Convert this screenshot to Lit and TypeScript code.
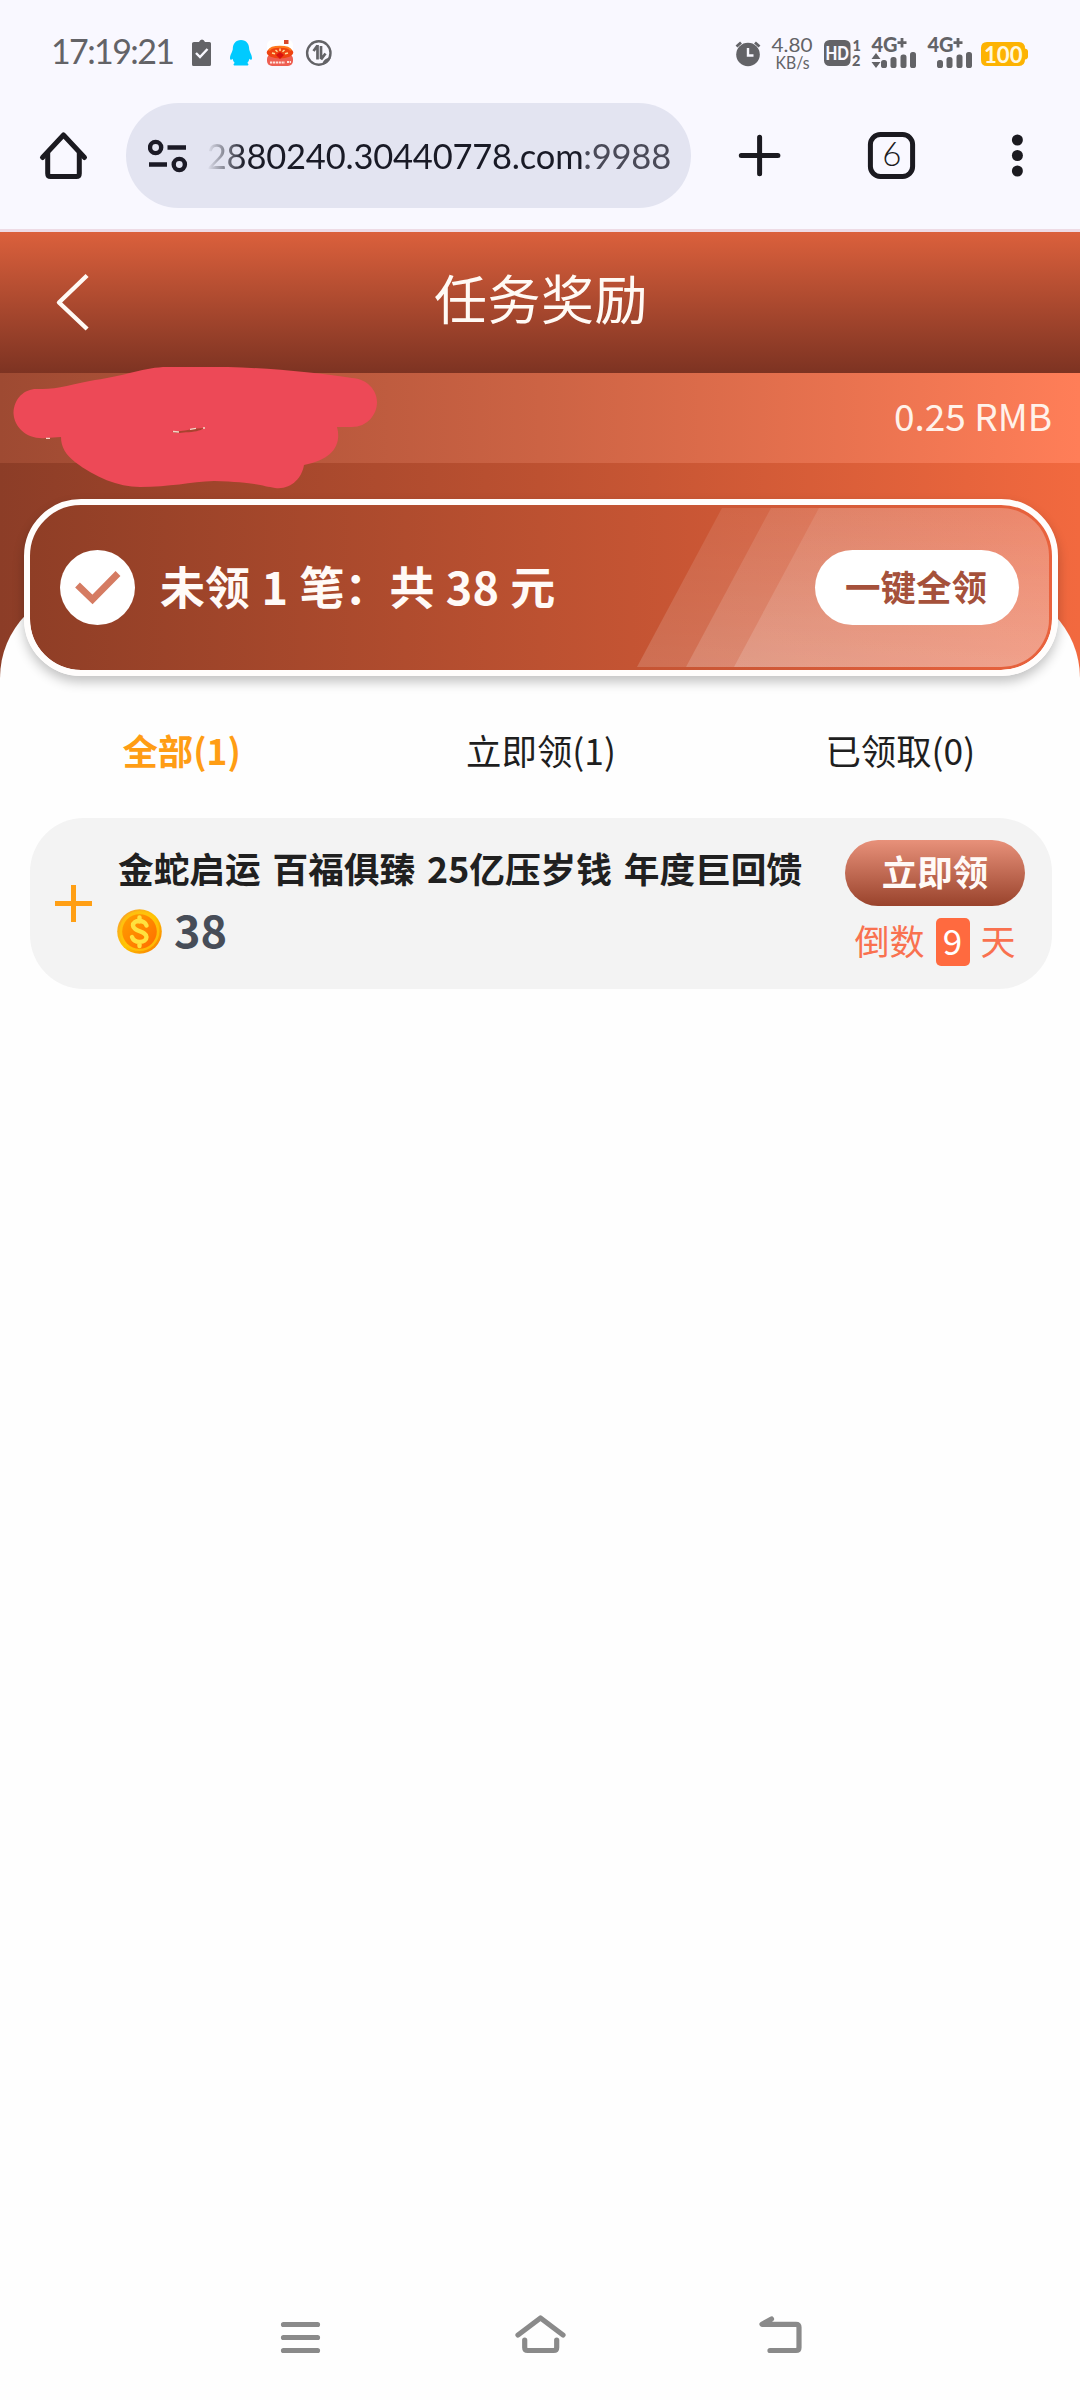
import { LitElement, html, css, svg } from "lit";
import { customElement, property, state } from "lit/decorators.js";
import { classMap } from "lit/directives/class-map.js";

const cjk = css`"Noto Sans CJK SC", "Noto Sans", sans-serif`;
const latin = css`Lato, "Noto Sans CJK SC", sans-serif`;

@customElement("status-bar")
class StatusBar extends LitElement {
  static styles = css`
    :host {
      display: flex;
      justify-content: space-between;
      height: 103px;
      color: #636367;
      font-family: ${latin};
    }
    svg {
      display: block;
      flex: none;
    }
    .glyphs {
      fill: #636367;
    }
  `;

  private bars(x: number) {
    return svg`
      <rect x=${x} y="24" width="6" height="8" rx="2.6"/>
      <rect x=${x + 9.5} y="21" width="6" height="11" rx="2.6"/>
      <rect x=${x + 19.5} y="18.5" width="6" height="13.5" rx="2.6"/>
      <rect x=${x + 29} y="16" width="6" height="16" rx="2.6"/>`;
  }

  render() {
    return html`
      <svg class="glyphs" width="360" height="103" viewBox="0 0 360 103">
        <text x="51" y="64.3" font-size="34" textLength="124" lengthAdjust="spacing">17:19:21</text>
        <path d="M194 42h5q1-2.500 3-2.500t3 2.500h4.500q1.500 0 1.500 1.500v21q0 1.500-1.500 1.500H193.500q-1.500 0-1.500-1.500v-21q0-1.500 2-1.500z"/>
        <path d="M196 53l4 4 7.500-8" fill="none" stroke="#f9f8ff" stroke-width="2.400"/>
        <path fill="#00caff" d="M241 40c5.500 0 8.200 4 8.200 9 0 2 2.800 6 2.800 9 0 2-1.200 2.500-2.600.8-.4 2-1.200 3.200-2.200 4.200 1.600.6 1.800 2.500-.2 2.500h-12c-2 0-1.800-1.900-.2-2.500-1-1-1.800-2.200-2.200-4.200-1.400 1.700-2.600 1.200-2.600-.8 0-3 2.800-7 2.800-9 0-5 2.700-9 8.200-9z"/>
        <rect x="267" y="40" width="26" height="26" rx="5" fill="#fff"/>
        <rect x="284" y="40" width="4.500" height="4" fill="#d8492c"/>
        <rect x="267" y="54" width="26" height="12" rx="5" fill="#ee5f52"/>
        <ellipse cx="280" cy="52.500" rx="13.200" ry="6" fill="#ef4310"/>
        <path d="M269 50.500c2-5 20-5 22 0" fill="none" stroke="#ff7a1d" stroke-width="2"/>
        <path d="M272 53l3 .8M275.500 50l2 1.700M280 48.500v2.500M284.500 50l-2 1.700M288 53l-3 .8" stroke="#ffe09a" stroke-width="1.500"/>
        <path d="M276 55l4-3 4 3-4 4z" fill="#d9120f"/>
        <path d="M270 62.500h15M287 62h4" stroke="#ffe3dc" stroke-width="2.200" stroke-dasharray="2.200 .7"/>
        <circle cx="318.800" cy="53" r="11.700" fill="none" stroke="#636367" stroke-width="2.400"/>
        <path d="M317.500 45v14.500M313.500 51l4-5.500M321 46v13M321 59.500l4.500-6" fill="none" stroke="#636367" stroke-width="2.700"/>
        <path d="M322 65c1-5 4-7 9-7.500-1.500 4-4.500 6.500-9 7.500z"/>
      </svg>
      <svg class="glyphs" width="360" height="103" viewBox="720 0 360 103">
        <circle cx="748" cy="54.500" r="11.800"/>
        <path d="M736.500 46.500l4.500-4M759.500 46.500l-4.500-4" stroke="#636367" stroke-width="2.800"/>
        <path d="M748 48v7.500h5.500" fill="none" stroke="#f9f8ff" stroke-width="2.400"/>
        <text x="771.500" y="51.800" font-size="19" textLength="41" lengthAdjust="spacingAndGlyphs">4.80</text>
        <text x="775.500" y="69.300" font-size="18" textLength="34" lengthAdjust="spacingAndGlyphs">KB/s</text>
        <rect x="824" y="40" width="26.500" height="26" rx="5.500"/>
        <text x="825.500" y="59.700" font-size="19" font-weight="900" fill="#f9f8ff" textLength="23.500" lengthAdjust="spacingAndGlyphs">HD</text>
        <text x="852.500" y="51.300" font-size="14.500" font-weight="900">1</text>
        <text x="852" y="65.500" font-size="14.500" font-weight="900">2</text>
        <text x="871.500" y="52.200" font-size="20" font-weight="900" textLength="26" lengthAdjust="spacingAndGlyphs">4G</text>
        <path d="M897.500 42.700h9M902 38v9.500" stroke="#636367" stroke-width="2.800"/>
        <g transform="translate(0 36)">${this.bars(881)}</g>
        <path d="M871.500 59l4.500-6 4.500 6zM871.500 62l4.500 6 4.500-6z"/>
        <text x="927.500" y="52.200" font-size="20" font-weight="900" textLength="26" lengthAdjust="spacingAndGlyphs">4G</text>
        <path d="M953.500 42.700h9M958 38v9.500" stroke="#636367" stroke-width="2.800"/>
        <g transform="translate(0 36)">${this.bars(937)}</g>
        <path fill="#fdb302" d="M987 42h32q6 0 6 6.500 3 .5 3 3v5q0 2.500-3 3 0 6.500-6 6.500h-32q-6 0-6-6V48q0-6 6-6z"/>
        <text x="984" y="62.500" font-size="23" font-weight="700" fill="#fff8e0" textLength="38.500" lengthAdjust="spacingAndGlyphs">100</text>
      </svg>
    `;
  }
}

@customElement("browser-bar")
class BrowserBar extends LitElement {
  static styles = css`
    :host {
      display: flex;
      align-items: flex-start;
      height: 126px;
      border-bottom: 3px solid #eedbe5;
      font-family: ${latin};
    }
    svg {
      display: block;
      flex: none;
    }
    .pill {
      display: flex;
      align-items: center;
      box-sizing: border-box;
      width: 565px;
      height: 105px;
      padding: 0 20px 0 22px;
      border-radius: 53px;
      background: #e3e4f1;
    }
    .url {
      display: flex;
      justify-content: flex-end;
      flex: 1;
      margin-left: 19px;
      overflow: hidden;
      white-space: nowrap;
      font-size: 34.5px;
      line-height: 60px;
      letter-spacing: -0.2px;
      color: #191a26;
      -webkit-mask-image: linear-gradient(90deg, transparent 0, #000 38px);
      mask-image: linear-gradient(90deg, transparent 0, #000 38px);
    }
    .port {
      color: #4a4a58;
    }
  `;

  render() {
    return html`
      <svg width="126" height="105" viewBox="0 103 126 105" fill="none" stroke="#1b1a20" stroke-width="5">
        <path d="M42.500 157.500L63.500 135l21 22.500" stroke-linecap="round" stroke-linejoin="round"/>
        <path d="M47.700 153v20.500q0 3 3 3h25.600q3 0 3-3V153"/>
      </svg>
      <div class="pill">
        <svg width="40" height="36" viewBox="148 137.500 40 36" fill="none" stroke="#1b1a26" stroke-width="4.400">
          <circle cx="155.600" cy="147" r="5.600"/>
          <path d="M167.500 147h18.500M149 164h18"/>
          <circle cx="179.300" cy="164" r="5.600"/>
        </svg>
        <div class="url"><span>2880240.30440778.com</span><span class="port">:9988</span></div>
      </div>
      <svg width="389" height="105" viewBox="691 103 389 105" fill="none" stroke="#1b1a20" stroke-width="5">
        <path d="M741.300 155.500h36.600M759.600 137.300v36.500" stroke-linecap="round"/>
        <rect x="870.400" y="134.500" width="42.200" height="42" rx="10"/>
        <text x="891.700" y="166" text-anchor="middle" font-size="33" font-weight="300" fill="#1b1a20" stroke="none">6</text>
        <g fill="#1b1a20" stroke="none">
          <circle cx="1017.400" cy="140" r="5.500"/>
          <circle cx="1017.400" cy="155.500" r="5.500"/>
          <circle cx="1017.400" cy="171" r="5.500"/>
        </g>
      </svg>
    `;
  }
}

@customElement("reward-summary")
class RewardSummary extends LitElement {
  @property({ type: Number }) count = 0;
  @property({ type: Number }) total = 0;

  static styles = css`
    :host {
      display: flex;
      align-items: center;
      position: relative;
      box-sizing: border-box;
      height: 177px;
      margin: 0 22px 0 24px;
      padding: 0 33px 0 30px;
      border: 6px solid #fffdfc;
      border-radius: 57px;
      background: linear-gradient(90deg, #8f3e26, #bc5131 50%, #e9623d) padding-box;
      box-shadow: 0 6px 12px rgba(0, 0, 0, 0.24);
      font-family: ${cjk};
      font-weight: 700;
    }
    .shine {
      position: absolute;
      inset: 3px;
      overflow: hidden;
      border-radius: 48px;
    }
    .shine svg,
    .check {
      display: block;
    }
    .check,
    .text,
    .all {
      position: relative;
      flex: none;
    }
    .text {
      flex: 1;
      margin-left: 25px;
      padding-bottom: 3px;
      font-size: 45px;
      line-height: 60px;
      word-spacing: 1.2px;
      color: #fffaf7;
      white-space: nowrap;
    }
    .all {
      width: 204px;
      height: 75px;
      padding: 0 2px 3px 0;
      border: 0;
      border-radius: 38px;
      background: #fff;
      color: #a5513b;
      font: inherit;
      font-size: 35.5px;
      line-height: 70px;
    }
  `;

  render() {
    return html`
      <div class="shine">
        <svg width="1016" height="159" viewBox="33 508 1016 159">
          <defs>
            <linearGradient id="band" x1="0" y1="0" x2="0" y2="1">
              <stop offset="0" stop-color="#fff" stop-opacity=".09"/>
              <stop offset="1" stop-color="#fff" stop-opacity=".16"/>
            </linearGradient>
          </defs>
          <g fill="url(#band)">
            <path d="M722 508H1049V667H637z"/>
            <path d="M771 508H1049V667H686z"/>
            <path d="M819 508H1049V667H734z"/>
          </g>
        </svg>
      </div>
      <svg class="check" width="75" height="75" viewBox="60 550 75 75">
        <circle cx="97.500" cy="587.500" r="37.500" fill="#fff"/>
        <path d="M77.500 585l15 14.500 25.500-26" fill="none" stroke="#d57b62" stroke-width="6.800"/>
      </svg>
      <div class="text">未领 ${this.count} 笔：共 ${this.total} 元</div>
      <button class="all">一键全领</button>
    `;
  }
}

@customElement("reward-item")
class RewardItem extends LitElement {
  @property() name = "";
  @property({ type: Number }) amount = 0;
  @property({ type: Number }) days = 0;

  static styles = css`
    :host {
      display: flex;
      box-sizing: border-box;
      height: 171px;
      margin: 0 28px 0 30px;
      padding: 22px 27px 0 24px;
      border-radius: 54px;
      background: #f3f3f3;
      font-family: ${cjk};
      font-size: 36px;
    }
    svg {
      display: block;
      flex: none;
    }
    .plus {
      margin-top: 44px;
    }
    .info {
      flex: 1;
      margin-left: 26px;
    }
    .name {
      margin-top: 2px;
      font-size: 35.7px;
      font-weight: 700;
      line-height: 52px;
      word-spacing: 3.7px;
      color: #202020;
      white-space: nowrap;
    }
    .amount {
      display: flex;
      align-items: center;
      gap: 12px;
      margin: 15px 0 0 -1px;
      height: 45px;
      font-size: 45px;
      font-weight: 700;
      line-height: 45px;
      color: #474d58;
    }
    .amount span {
      padding-bottom: 6px;
    }
    .side {
      display: flex;
      flex-direction: column;
      align-items: center;
      width: 180px;
    }
    .claim {
      width: 180px;
      height: 66px;
      padding: 0 0 4px;
      border: 0;
      border-radius: 33px;
      background: linear-gradient(#e8917a, #99432c);
      color: #fffaf7;
      font: inherit;
      font-size: 35.5px;
      font-weight: 700;
      line-height: 58px;
    }
    .left {
      display: flex;
      align-items: center;
      gap: 11px;
      margin-top: 12px;
      height: 48px;
      font-size: 35px;
      line-height: 44px;
      color: #f9714f;
    }
    .left span {
      height: 48px;
    }
    .left .days {
      width: 34px;
      border-radius: 5px;
      background: #ff6a3f;
      color: #fff;
      text-align: center;
    }
  `;

  render() {
    return html`
      <svg class="plus" width="38" height="38" viewBox="0 0 38 38" stroke="#ff9f14" stroke-width="5">
        <path d="M1 19.500h37M19.500 1v37"/>
      </svg>
      <div class="info">
        <div class="name">${this.name}</div>
        <div class="amount">
          <svg width="45" height="45" viewBox="0 0 45 45">
            <defs>
              <linearGradient id="rim" x1="0" y1="0" x2="1" y2="1">
                <stop offset=".15" stop-color="#f9a825"/>
                <stop offset=".5" stop-color="#ffc400"/>
                <stop offset=".85" stop-color="#fb8c00"/>
              </linearGradient>
              <linearGradient id="face" x1="0" y1="0" x2="1" y2="1">
                <stop offset="0" stop-color="#ffa000"/>
                <stop offset="1" stop-color="#ff6d00"/>
              </linearGradient>
            </defs>
            <circle cx="22.500" cy="22.500" r="22.300" fill="url(#rim)"/>
            <circle cx="22.500" cy="22" r="20" fill="#ffc60a" opacity=".75"/>
            <circle cx="22.500" cy="22.500" r="17.300" fill="url(#face)"/>
            <path d="M29.500 16.500c-1.500-6-13.500-6-13.500 0s13.500 5.500 13.500 11.500-12 7-14.500 0M22.500 8.500v4M22.500 33v4"
              fill="none" stroke="#ffe23f" stroke-width="4.400" stroke-linecap="round"/>
          </svg>
          <span>${this.amount}</span>
        </div>
      </div>
      <div class="side">
        <button class="claim">立即领</button>
        <div class="left"><span>倒数</span><span class="days">${this.days}</span><span>天</span></div>
      </div>
    `;
  }
}

@customElement("app-root")
class AppRoot extends LitElement {
  @state() private tab = 0;

  private tabs = [
    { label: "全部", count: 1 },
    { label: "立即领", count: 1 },
    { label: "已领取", count: 0 },
  ];

  static styles = css`
    :host {
      display: flex;
      flex-direction: column;
      width: 1080px;
      height: 2400px;
      overflow: hidden;
      background: #fefefe;
      font-family: ${cjk};
    }
    .chrome {
      background: #f9f8ff;
    }
    .header {
      display: grid;
      grid-template-columns: 145px 1fr 145px;
      align-items: center;
      height: 141px;
      background: linear-gradient(#db603c, #7d3322);
      color: #fffaf5;
      font-size: 53px;
      line-height: 60px;
      letter-spacing: 0.5px;
      text-align: center;
    }
    .title {
      padding: 0 0 12px 2px;
    }
    .back {
      display: block;
      margin-top: -2px;
    }
    .hero {
      position: relative;
      height: 307px;
      background: linear-gradient(90deg, #8c3d27, #bd5131 50%, #f2693f);
    }
    .balance {
      display: flex;
      align-items: center;
      justify-content: flex-end;
      box-sizing: border-box;
      height: 90px;
      padding: 0 28px 6px 0;
      background: linear-gradient(90deg, #9e4a32, #cc6344 50%, #ff7e58);
      color: #fff2ea;
      font-size: 37px;
    }
    .scribble {
      position: absolute;
      left: 0;
      top: -13px;
    }
    .sheet {
      margin-top: -92px;
      position: relative;
      flex: 1;
      border-radius: 90px 90px 0 0;
      background: #fefefe;
    }
    .sheet reward-summary {
      margin-top: -89px;
    }
    .tabs {
      display: grid;
      grid-template-columns: repeat(3, 1fr);
      height: 142px;
      padding-left: 2px;
      text-align: center;
      font-size: 35.4px;
      line-height: 148px;
      color: #1f1f1f;
    }
    .tab {
      font-weight: 400;
    }
    .active {
      color: #ff9d14;
      font-weight: 700;
    }
    .nav {
      display: flex;
      justify-content: center;
      height: 120px;
    }
    .nav svg {
      display: block;
    }
  `;

  render() {
    return html`
      <div class="chrome">
        <status-bar></status-bar>
        <browser-bar></browser-bar>
      </div>
      <header class="header">
        <svg class="back" width="145" height="60" viewBox="1 271 145 60" fill="none" stroke="#fffaf5" stroke-width="4.400">
          <path d="M86.500 276L60 301.500l26.500 25" stroke-linejoin="round" stroke-linecap="square"/>
        </svg>
        <div class="title">任务奖励</div>
      </header>
      <section class="hero">
        <div class="balance">0.25 RMB</div>
        <svg class="scribble" width="400" height="140" viewBox="0 360 400 140">
          <path fill="#ed4957" d="M38 389C56 390 72 384 95 380C125 376 145 367 167 367H228C270 368 320 373 352 378C367 379 377 390 377 402C377 415 367 427 352 427H337C342 445 332 460 304 465C302 478 291 490 275 488C262 486 254 482 214 481C190 482 170 487 140 487C118 487 95 477 75 462C66 455 61 447 61 437L46 438C28 440 14 428 13.500 413C14 397 26 388 38 389Z"/>
          <path d="M172 431.500c3 2.500 8 1.500 14 .8 8-.3 14-1.300 18-4.300-9 0-20 3.500-32 3.500z" fill="#a9422f"/>
          <path d="M173 431.500l6 .5M46 438.300h4M190 429.300l6-1M203 428h2" stroke="#f3d7c8" stroke-width="1.300"/>
        </svg>
      </section>
      <main class="sheet">
        <reward-summary count="1" total="38"></reward-summary>
        <nav class="tabs">
          ${this.tabs.map(
            (t, i) => html`<div
              class=${classMap({ tab: true, active: i === this.tab })}
              @click=${() => (this.tab = i)}
            >${t.label}(${t.count})</div>`
          )}
        </nav>
        <reward-item name="金蛇启运 百福俱臻 25亿压岁钱 年度巨回馈" amount="38" days="9"></reward-item>
      </main>
      <footer class="nav">
        <svg width="600" height="120" viewBox="240 2280 600 120" fill="none" stroke="#8a8a8a" stroke-width="5.200" stroke-linecap="round" stroke-linejoin="round">
          <path d="M283.500 2324.500h34M283.500 2337.500h34M283.500 2350.500h34"/>
          <path d="M518 2335l22.500-17 22.500 17M524.700 2340v7.500q0 3 3 3h26q3 0 3-3V2340"/>
          <path d="M771.500 2319l-9.500 5.300h34q3 0 3 3v20.200q0 3-3 3h-26"/>
        </svg>
      </footer>
    `;
  }
}
